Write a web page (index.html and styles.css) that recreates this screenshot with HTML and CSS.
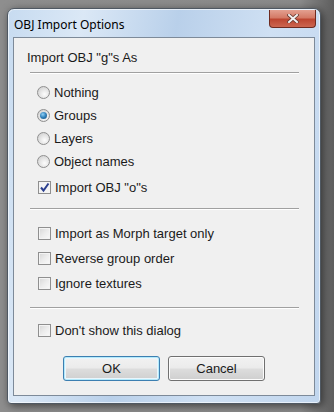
FILE: index.html
```html
<!DOCTYPE html>
<html lang="en">
<head>
  <meta charset="UTF-8">
  <title>OBJ Import Options</title>
  <link rel="stylesheet" href="styles.css">
</head>
<body>

  <div class="janela">
    <div class="barra-titulo">
      <span class="titulo">OBJ Import Options</span>
      <div class="fechar">
        <svg width="12" height="9" viewBox="0 0 12 9">
          <path d="M2 1 L10 8 M10 1 L2 8" stroke="#6b3a30" stroke-width="3.6" stroke-linecap="square"/>
          <path d="M2 1 L10 8 M10 1 L2 8" stroke="#f2f2f2" stroke-width="2" stroke-linecap="square"/>
        </svg>
      </div>
    </div>

    <div class="cliente">
      <div class="cabecalho">Import OBJ "g"s As</div>
      <div class="separador"></div>

      <div class="grupo grupo-um">
        <div class="opcao"><span class="radio"></span>Nothing</div>
        <div class="opcao"><span class="radio marcado"></span>Groups</div>
        <div class="opcao"><span class="radio"></span>Layers</div>
        <div class="opcao"><span class="radio"></span>Object names</div>
        <div class="opcao extra"><span class="caixa marcada">
          <svg width="11" height="11" viewBox="0 0 11 11"><path d="M2 5.5 L4.5 8.5 L9.5 1.5" fill="none" stroke="#2b3f8f" stroke-width="2"/></svg>
        </span>Import OBJ "o"s</div>
      </div>
      <div class="separador"></div>

      <div class="grupo grupo-dois">
        <div class="opcao alta"><span class="caixa"></span>Import as Morph target only</div>
        <div class="opcao alta"><span class="caixa"></span>Reverse group order</div>
        <div class="opcao alta"><span class="caixa"></span>Ignore textures</div>
      </div>
      <div class="separador"></div>

      <div class="grupo grupo-tres">
        <div class="opcao"><span class="caixa"></span>Don't show this dialog</div>
      </div>

      <div class="botoes">
        <button class="botao foco">OK</button>
        <button class="botao">Cancel</button>
      </div>
    </div>
  </div>

</body>
</html>
```

FILE: styles.css
```css
body {
  margin: 0;
  width: 334px;
  height: 412px;
  overflow: hidden;
  background: linear-gradient(to right, #8e8e8e 0%, #8a8a8a 90%, #5e5e5e 100%);
  font-family: "Liberation Sans", Arial, sans-serif;
  font-size: 13px;
  color: #1a1a1a;
}

.janela {
  box-sizing: border-box;
  margin: 8px 0 0 7px;
  width: 314px;
  height: 396px;
  padding: 0 5px 6px 5px;
  border: 1px solid #4f5862;
  border-radius: 7px 7px 4px 4px;
  background: linear-gradient(100deg, #c7dbf0 0%, #dbe8f6 20%, #b9d0ea 45%, #cfe0f3 70%, #c1d6ee 100%);
  box-shadow: 2px 2px 8px rgba(0, 0, 0, 0.55), inset 0 0 0 1px rgba(255, 255, 255, 0.6);
}

.barra-titulo {
  height: 28px;
  display: flex;
  justify-content: space-between;
  align-items: flex-start;
}

.titulo {
  font-family: "Noto Sans", sans-serif;
  font-size: 12px;
  margin: 7px 0 0 1px;
  color: #000;
}

.fechar {
  box-sizing: border-box;
  width: 47px;
  height: 18px;
  margin: 1px -1px 0 0;
  display: flex;
  align-items: center;
  justify-content: center;
  border: 1px solid #6e2a1f;
  border-top: none;
  border-radius: 0 0 4px 4px;
  background: linear-gradient(to bottom, #e3a090 0%, #d47a66 45%, #bd4631 55%, #cc6650 100%);
}

.cliente {
  box-sizing: border-box;
  height: 359px;
  border: 1px solid #7d8a99;
  background: #f0f0f0;
  padding: 12px 0 0 0;
}

.cabecalho {
  height: 16px;
  line-height: 16px;
  padding-left: 13px;
  margin-bottom: 6px;
}

.separador {
  margin: 0 15px 0 16px;
  height: 0;
  border-top: 1px solid #a0a0a0;
  border-bottom: 1px solid #fff;
}

.grupo {
  padding-left: 23px;
}

.grupo-um {
  padding-top: 7px;
  padding-bottom: 9px;
}

.grupo-dois {
  padding-top: 11px;
  padding-bottom: 11px;
}

.grupo-tres {
  padding-top: 9px;
}

.opcao {
  height: 23px;
  display: flex;
  align-items: center;
}

.opcao.extra {
  margin-top: 3px;
}

.opcao.alta {
  height: 25px;
}

.grupo-tres .opcao {
  height: 24px;
}

.radio {
  box-sizing: border-box;
  width: 13px;
  height: 13px;
  margin-right: 4px;
  border-radius: 50%;
  border: 1px solid #8f8f8f;
  background: radial-gradient(circle at 60% 65%, #fdfdfd 0%, #e6e6e6 45%, #c9c9c9 100%);
  display: flex;
  align-items: center;
  justify-content: center;
}

.radio.marcado::after {
  content: "";
  width: 7px;
  height: 7px;
  border-radius: 50%;
  background: radial-gradient(circle at 40% 35%, #8fd0f6 0%, #2f7fb9 50%, #184e7a 100%);
}

.caixa {
  box-sizing: border-box;
  width: 13px;
  height: 13px;
  margin: 0 4px 0 1px;
  border: 1px solid #8f8f8f;
  background: linear-gradient(135deg, #d6d6d6 0%, #ececec 50%, #fafafa 100%);
  box-shadow: inset 0 0 0 1px #f4f4f4;
  display: flex;
  align-items: center;
  justify-content: center;
}

.caixa.marcada {
  background: #f4f4f4;
}

.botoes {
  display: flex;
  justify-content: center;
  gap: 8px;
  margin-top: 14px;
}

.botao {
  box-sizing: border-box;
  width: 97px;
  height: 25px;
  font-family: "Liberation Sans", Arial, sans-serif;
  font-size: 13px;
  color: #1a1a1a;
  border: 1px solid #707070;
  border-radius: 3px;
  background: linear-gradient(to bottom, #f2f2f2 0%, #ebebeb 48%, #dddddd 52%, #cfcfcf 100%);
  box-shadow: inset 0 0 0 1px #fcfcfc;
  padding: 0;
}

.botao.foco {
  border-color: #3c7fb1;
  box-shadow: inset 0 0 0 1px #48d2fa55, inset 0 0 0 2px #eaf6fd;
}
```
